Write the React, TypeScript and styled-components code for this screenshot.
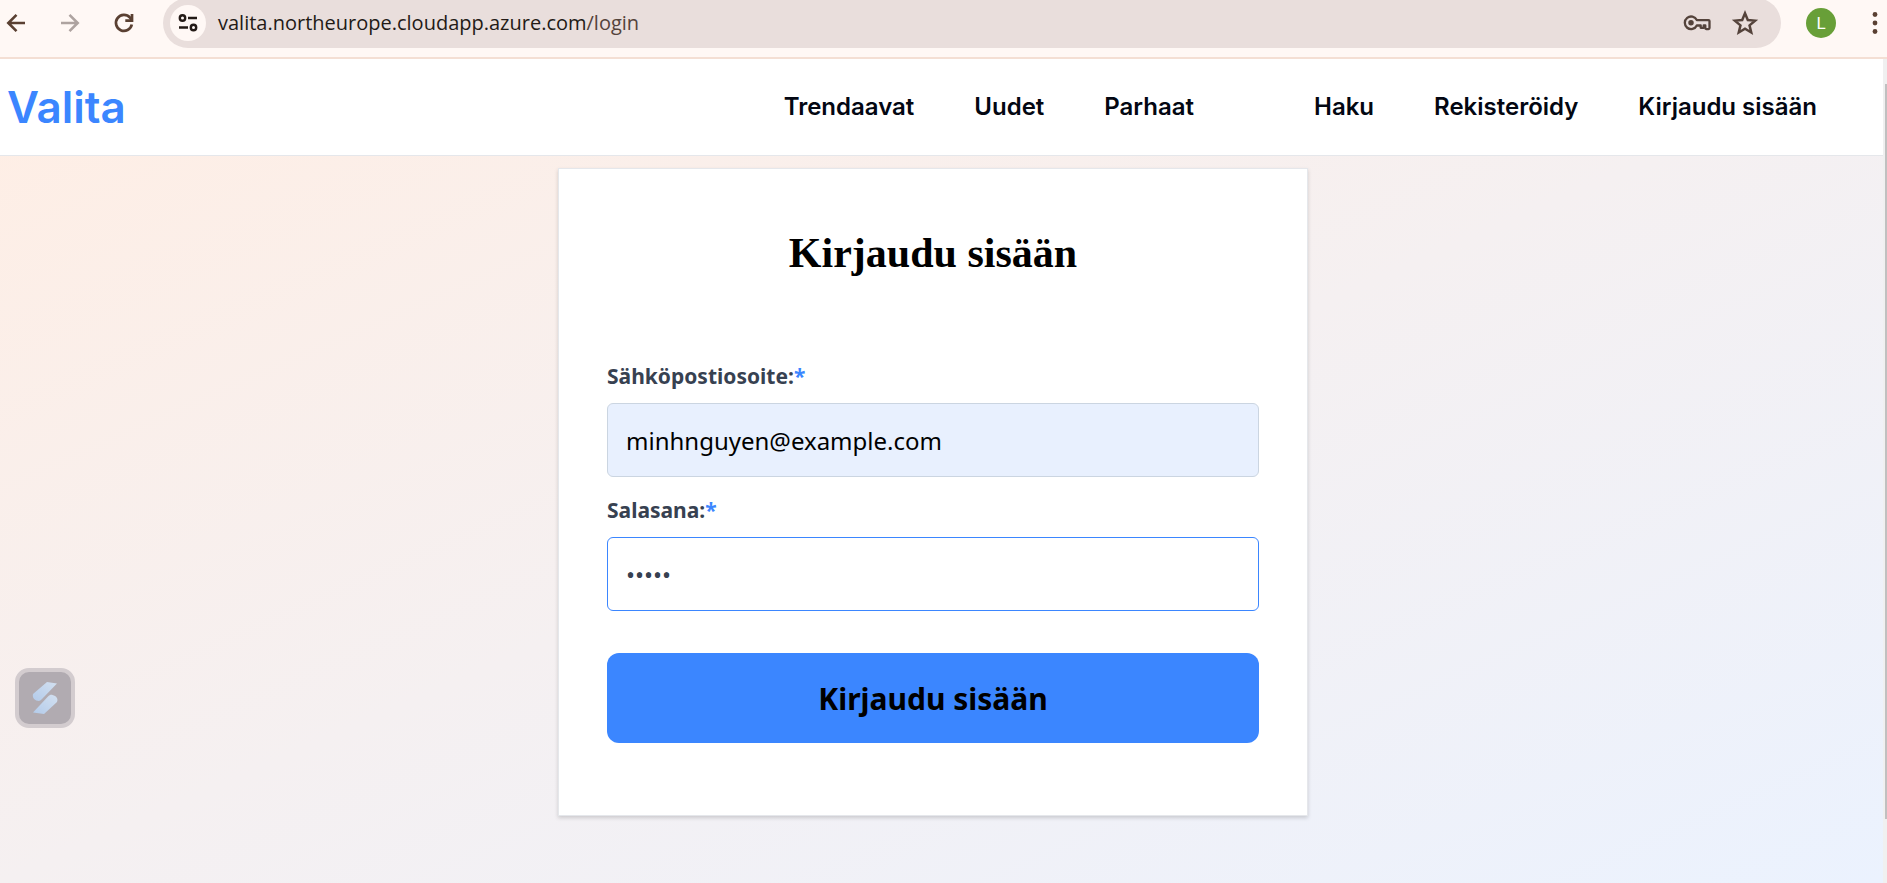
import React from "react";
import styled, { createGlobalStyle } from "styled-components";

const GlobalStyle = createGlobalStyle`
  *, *::before, *::after { box-sizing: border-box; }
  html, body { margin: 0; padding: 0; }
  body { font-family: "Noto Sans", "Liberation Sans", sans-serif; color: #000; background: #fff; }
  button, input { font: inherit; }
  svg { flex: none; }
`;

const Screen = styled.div`
  display: flex;
  flex-direction: column;
  min-height: 100vh;
`;

const Toolbar = styled.div`
  display: flex;
  align-items: flex-end;
  height: 59px;
  overflow: hidden;
  background: #fff8f5;
  border-bottom: 2px solid #f4dfd4;
`;

const BrowserControls = styled.div`
  display: flex;
  align-items: center;
  justify-content: flex-end;
  gap: 30px;
  width: 163px;
  height: 50px;
  margin-bottom: 9px;
  padding-right: 27px;
  flex: none;
`;

const IconButton = styled.button<{ $color?: string }>`
  display: flex;
  align-items: center;
  justify-content: center;
  flex: none;
  width: 24px;
  height: 24px;
  padding: 0;
  border: 0;
  background: none;
  color: ${(p) => p.$color ?? "#5a4032"};
  cursor: pointer;
`;

const AddressBar = styled.div`
  display: flex;
  align-items: center;
  flex: 1;
  min-width: 0;
  height: 50px;
  margin-bottom: 9px;
  padding: 0 24px 0 7px;
  border-radius: 25px;
  background: #e9dedc;
`;

const SiteInfo = styled.button`
  display: flex;
  align-items: center;
  justify-content: center;
  flex: none;
  width: 36px;
  height: 36px;
  padding: 0;
  border: 0;
  border-radius: 50%;
  background: #fff8f5;
  color: #231a16;
`;

const Address = styled.div`
  flex: 1;
  min-width: 0;
  margin-left: 12px;
  font-family: "Open Sans", "Noto Sans", sans-serif;
  font-size: 20px;
  line-height: 28px;
  color: #231a16;
  white-space: nowrap;
`;

const AddressPath = styled.span`
  color: #54433b;
`;

const AddressActions = styled.div`
  display: flex;
  gap: 24px;
`;

const ProfileArea = styled.div`
  display: flex;
  align-items: center;
  justify-content: space-between;
  flex: none;
  width: 106px;
  height: 50px;
  margin-bottom: 9px;
  padding-left: 25px;
`;

const Avatar = styled.button`
  width: 30px;
  height: 30px;
  padding: 0;
  border: 0;
  border-radius: 50%;
  background: #689f38;
  color: #fff;
  font-family: Roboto, sans-serif;
  font-size: 17px;
  line-height: 30px;
  text-align: center;
`;

const Viewport = styled.div`
  display: flex;
  flex: 1;
`;

const Page = styled.div`
  display: flex;
  flex-direction: column;
  flex: 1;
  min-width: 0;
  background: linear-gradient(to bottom right, #ffeee4, #ebf2fe);
`;

const ScrollTrack = styled.div`
  flex: none;
  display: flex;
  width: 4px;
  padding: 25px 0 64px 2px;
  background: #f0f0f0;
`;

const ScrollThumb = styled.div`
  flex: 1;
  background: #c0c0c0;
`;

const Header = styled.header`
  display: flex;
  align-items: center;
  justify-content: space-between;
  height: 97px;
  padding: 0 66px 0 7px;
  background: #fff;
  border-bottom: 1px solid #e5e7eb;
  font-family: Inter, "Liberation Sans", sans-serif;
  font-weight: 600;
`;

const Brand = styled.a`
  color: #3b86ff;
  font-size: 44px;
  line-height: 60px;
  text-decoration: none;
`;

const Nav = styled.nav`
  display: flex;
  gap: 120px;
`;

const NavGroup = styled.div`
  display: flex;
  gap: 60px;
`;

const NavLink = styled.a`
  color: #030712;
  font-size: 24px;
  line-height: 32px;
  text-decoration: none;
  white-space: nowrap;
`;

const Main = styled.main`
  display: flex;
  justify-content: center;
  flex: 1;
  align-items: flex-start;
  padding: 12px 17px 66px 0;
`;

const Card = styled.form`
  display: flex;
  flex-direction: column;
  width: 750px;
  padding: 60px 48px 72px;
  background: #fff;
  border: 1px solid #e5e7eb;
  box-shadow: 0 2px 4px rgba(0, 0, 0, 0.16);
`;

const Title = styled.h1`
  margin: 0 0 84px;
  font-family: Georgia, "Liberation Serif", serif;
  font-size: 42px;
  font-weight: 700;
  line-height: 48px;
  text-align: center;
`;

const Label = styled.label`
  margin-bottom: 12px;
  color: #374151;
  font-size: 21px;
  font-weight: 700;
  line-height: 30px;
`;

const Required = styled.span`
  color: #3b86ff;
`;

const Field = styled.input<{ $filled?: boolean }>`
  width: 100%;
  height: 74px;
  margin: 0 0 18px;
  padding: 0 18px;
  border: 1px solid ${(p) => (p.$filled ? "#cbd5e1" : "#3b86ff")};
  border-radius: 6px;
  outline: none;
  background: ${(p) => (p.$filled ? "#e8f0fe" : "#fff")};
  color: ${(p) => (p.$filled ? "#000" : "#374151")};
  font-size: 24px;
`;

const Submit = styled.button`
  height: 90px;
  margin-top: 24px;
  border: 0;
  border-radius: 12px;
  background: #3b86ff;
  color: #000;
  font-size: 30px;
  font-weight: 700;
  cursor: pointer;
`;

const FloatingWidget = styled.button`
  position: fixed;
  left: 15px;
  bottom: 155px;
  display: flex;
  align-items: center;
  justify-content: center;
  width: 60px;
  height: 60px;
  padding: 0;
  border: 4px solid #d3cccf;
  border-radius: 14px;
  background: #b1abb1;
`;

const BackIcon = () => (
  <svg width="24" height="24" viewBox="0 0 24 24" fill="none" stroke="currentColor" strokeWidth="2.6">
    <path d="M21 12H5M12.5 3.8 4.3 12l8.2 8.2" />
  </svg>
);

const ForwardIcon = () => (
  <svg width="24" height="24" viewBox="0 0 24 24" fill="none" stroke="currentColor" strokeWidth="2.6">
    <path d="M3 12h16M11.5 3.8 19.7 12l-8.2 8.2" />
  </svg>
);

const ReloadIcon = () => (
  <svg width="24" height="24" viewBox="0 0 24 24" fill="none" stroke="currentColor" strokeWidth="2.7">
    <path d="M19.8 13.5A8 8 0 1 1 18 6.6l1.6 2" />
    <path d="M20 3v6.700h-6.700" />
  </svg>
);

const TuneIcon = () => (
  <svg width="22" height="20" viewBox="0 0 22 20" fill="none" stroke="currentColor" strokeWidth="2.4">
    <circle cx="5.5" cy="5" r="2.7" />
    <path d="M11 5h9M2 14.500h9" />
    <circle cx="16.5" cy="14.5" r="2.7" />
  </svg>
);

const KeyIcon = () => (
  <svg width="28" height="18" viewBox="0 0 28 18" fill="none" stroke="currentColor" strokeWidth="2.3" strokeLinejoin="round">
    <path d="M13.800 6.100h11.700a1 1 0 0 1 1 1v7a1 1 0 0 1-1 1h-2.200a1 1 0 0 1-1-1v-2.600h-1.600v2.300h-3v-2.300h-3.900a6.300 6.300 0 1 1 0-5.400z" />
    <circle cx="8" cy="8.8" r="1.6" fill="currentColor" />
  </svg>
);

const StarIcon = () => (
  <svg width="28" height="28" viewBox="0 0 26 26" fill="none" stroke="currentColor" strokeWidth="2.3">
    <path d="m13 4 2.600 6.200 6.800.6-5.200 4.400 1.600 6.600-5.800-3.500-5.800 3.500 1.600-6.600-5.200-4.400 6.800-.6z" />
  </svg>
);

const MoreIcon = () => (
  <svg width="24" height="24" viewBox="0 0 24 24" fill="currentColor">
    <circle cx="12" cy="3.5" r="2.4" />
    <circle cx="12" cy="12" r="2.4" />
    <circle cx="12" cy="20.5" r="2.4" />
  </svg>
);

const WidgetLogo = () => (
  <svg width="28" height="34" viewBox="0 0 28 34">
    <defs>
      <linearGradient id="ribbon" x1="0" y1="1" x2="1" y2="0">
        <stop offset="0" stopColor="#b3cbea" />
        <stop offset="1" stopColor="#d3e0f0" />
      </linearGradient>
    </defs>
    <path d="M16 1 26 2.500 11 18a5 5 0 0 1-3 2C4 20 1 17 2 13z" fill="url(#ribbon)" />
    <path d="M13 33 2 31.500 17 15.500c1.500-1.500 3-2 4.500-1.500 4 .8 6 4 4.500 7z" fill="url(#ribbon)" />
  </svg>
);

export default function App() {
  return (
    <Screen>
      <GlobalStyle />
      <Toolbar>
        <BrowserControls>
          <IconButton aria-label="Takaisin"><BackIcon /></IconButton>
          <IconButton aria-label="Eteenpäin" $color="#aea3a0"><ForwardIcon /></IconButton>
          <IconButton aria-label="Lataa uudelleen"><ReloadIcon /></IconButton>
        </BrowserControls>
        <AddressBar>
          <SiteInfo aria-label="Sivuston tiedot"><TuneIcon /></SiteInfo>
          <Address>
            valita.northeurope.cloudapp.azure.com<AddressPath>/login</AddressPath>
          </Address>
          <AddressActions>
            <IconButton aria-label="Salasanat" $color="#54433b"><KeyIcon /></IconButton>
            <IconButton aria-label="Lisää kirjanmerkki" $color="#54433b"><StarIcon /></IconButton>
          </AddressActions>
        </AddressBar>
        <ProfileArea>
          <Avatar>L</Avatar>
          <IconButton aria-label="Valikko"><MoreIcon /></IconButton>
        </ProfileArea>
      </Toolbar>
      <Viewport>
        <Page>
          <Header>
            <Brand href="#">Valita</Brand>
            <Nav>
              <NavGroup>
                <NavLink href="#">Trendaavat</NavLink>
                <NavLink href="#">Uudet</NavLink>
                <NavLink href="#">Parhaat</NavLink>
              </NavGroup>
              <NavGroup>
                <NavLink href="#">Haku</NavLink>
                <NavLink href="#">Rekisteröidy</NavLink>
                <NavLink href="#">Kirjaudu sisään</NavLink>
              </NavGroup>
            </Nav>
          </Header>
          <Main>
            <Card onSubmit={(e) => e.preventDefault()}>
              <Title>Kirjaudu sisään</Title>
              <Label htmlFor="email">Sähköpostiosoite:<Required>*</Required></Label>
              <Field id="email" type="email" defaultValue="minhnguyen@example.com" $filled />
              <Label htmlFor="password">Salasana:<Required>*</Required></Label>
              <Field id="password" type="password" defaultValue="salas" />
              <Submit type="submit">Kirjaudu sisään</Submit>
            </Card>
          </Main>
        </Page>
        <ScrollTrack><ScrollThumb /></ScrollTrack>
      </Viewport>
      <FloatingWidget aria-label="Avaa apuri"><WidgetLogo /></FloatingWidget>
    </Screen>
  );
}
